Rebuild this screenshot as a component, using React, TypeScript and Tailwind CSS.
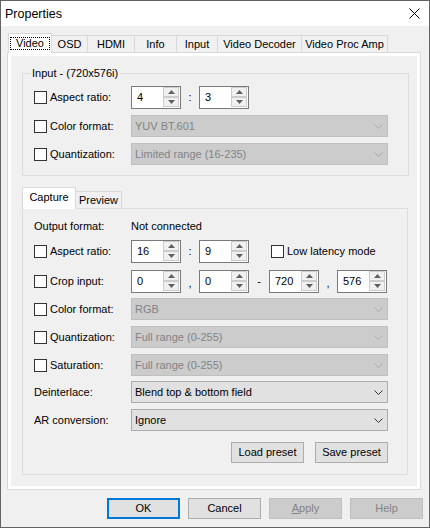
import React from 'react';

const tabs = [
  { label: 'Video', w: 'w-[44px]' },
  { label: 'OSD', w: 'w-[36px]' },
  { label: 'HDMI', w: 'w-[47px]' },
  { label: 'Info', w: 'w-[42px]' },
  { label: 'Input', w: 'w-[41px]' },
  { label: 'Video Decoder', w: 'w-[84px]' },
  { label: 'Video Proc Amp', w: 'w-[86px]' },
];

function Arrow({ down }: { down?: boolean }) {
  return (
    <svg width="7" height="4" viewBox="0 0 7 4">
      {down ? <polygon points="0,0 7,0 3.5,4" fill="#606060" /> : <polygon points="0,4 7,4 3.5,0" fill="#606060" />}
    </svg>
  );
}

function Spin({ value }: { value: string }) {
  return (
    <div className="flex h-[23px] w-[50px] border border-[#7a7a7a] bg-white">
      <div className="flex flex-1 items-center pl-[5px]">{value}</div>
      <div className="flex w-[17px] flex-col justify-center pr-px">
        <div className="flex h-[10px] items-center justify-center border border-[#cccccc] bg-[#f0f0f0]">
          <Arrow />
        </div>
        <div className="flex h-[10px] items-center justify-center border border-[#cccccc] bg-[#f0f0f0]">
          <Arrow down />
        </div>
      </div>
    </div>
  );
}

function Combo({ text, disabled }: { text: string; disabled?: boolean }) {
  return (
    <div
      className={
        disabled
          ? 'flex h-[22px] w-[257px] items-center justify-between border border-[#bfbfbf] bg-[#cccccc] pl-[3px] pr-[4px] text-[#838383]'
          : 'flex h-[22px] w-[257px] items-center justify-between border border-[#adadad] bg-[#e1e1e1] pl-[3px] pr-[4px] text-black'
      }
    >
      <span>{text}</span>
      <svg width="9" height="5" viewBox="0 0 9 5">
        <polyline points="0.5,0.5 4.5,4.5 8.5,0.5" fill="none" stroke={disabled ? '#a8a8a8' : '#333333'} strokeWidth="1" />
      </svg>
    </div>
  );
}

function Check({ label }: { label: string }) {
  return (
    <div className="flex items-center">
      <div className="h-[13px] w-[13px] border border-[#333333] bg-white" />
      <span className="ml-[3px]">{label}</span>
    </div>
  );
}

function Btn({ children, variant }: { children: React.ReactNode; variant?: 'default' | 'disabled' }) {
  if (variant === 'default')
    return (
      <div className="flex h-[21px] w-[73px] items-center justify-center border-2 border-[#0078d7] bg-[#e1e1e1]">{children}</div>
    );
  if (variant === 'disabled')
    return (
      <div className="flex h-[21px] w-[73px] items-center justify-center border border-[#bfbfbf] bg-[#cccccc] text-[#838383]">
        {children}
      </div>
    );
  return <div className="flex h-[21px] w-[73px] items-center justify-center border border-[#adadad] bg-[#e1e1e1]">{children}</div>;
}

export default function App() {
  return (
    <div
      className="flex h-[528px] w-[430px] flex-col border border-[#646464] bg-[#f0f0f0] text-[11px] leading-none text-black"
      style={{ fontFamily: '"Liberation Sans", Arial, sans-serif' }}
    >
      {/* Title bar */}
      <div className="flex h-[25px] items-center justify-between bg-white pl-[4px] pr-[9px]">
        <span className="pt-[2px] text-[12.5px]">Properties</span>
        <svg width="11" height="11" viewBox="0 0 11 11">
          <path d="M0.5 0.5 L10.5 10.5 M10.5 0.5 L0.5 10.5" stroke="#000" strokeWidth="1" />
        </svg>
      </div>

      {/* Tab control */}
      <div className="ml-[6px] mt-[7px] w-[414px]">
        <div className="flex h-[20px] items-end pl-px">
          {tabs.map((t, i) =>
            i === 0 ? (
              <div
                key={t.label}
                className={`relative z-10 flex h-[20px] items-start justify-center border-l border-r border-t border-[#d9d9d9] bg-white pt-[3px] ${t.w}`}
              >
                <div className="flex h-[13px] w-[40px] items-center justify-center border border-dotted border-black">
                  {t.label}
                </div>
              </div>
            ) : (
              <div
                key={t.label}
                className={`mb-px flex h-[17px] items-center justify-center border-r border-t border-[#d9d9d9] bg-[#f0f0f0] pt-[1px] ${t.w}`}
              >
                {t.label}
              </div>
            )
          )}
        </div>

        <div className="-mt-px h-[438px] border border-[#d9d9d9] bg-white p-[3px]">
          <div className="flex h-full flex-col bg-[#f0f0f0] pl-[11px]">
            {/* Input group */}
            <div className="relative mt-[17px] h-[103px] w-[387px] border border-[#dcdcdc] pl-[11px] pt-[11px]">
              <span className="absolute left-[7px] top-[-7px] bg-[#f0f0f0] px-[2px] leading-[13px]">Input - (720x576i)</span>
              <div className="flex h-[24px] items-center">
                <div className="w-[97px]">
                  <Check label="Aspect ratio:" />
                </div>
                <Spin value="4" />
                <span className="flex w-[18px] justify-center">:</span>
                <Spin value="3" />
              </div>
              <div className="mt-[5px] flex h-[24px] items-center">
                <div className="w-[97px]">
                  <Check label="Color format:" />
                </div>
                <Combo text="YUV BT.601" disabled />
              </div>
              <div className="mt-[4px] flex h-[24px] items-center">
                <div className="w-[97px]">
                  <Check label="Quantization:" />
                </div>
                <Combo text="Limited range (16-235)" disabled />
              </div>
            </div>

            {/* Capture / Preview */}
            <div className="mt-[11px] w-[386px]">
              <div className="flex h-[22px] items-end">
                <div className="relative z-10 flex h-[22px] w-[54px] items-center justify-center border-l border-r border-t border-[#d9d9d9] bg-white pb-[3px]">
                  Capture
                </div>
                <div className="mb-px flex h-[17px] w-[46px] items-center justify-center border-r border-t border-[#d9d9d9] bg-[#f0f0f0] pt-[1px]">
                  Preview
                </div>
              </div>
              <div className="-mt-px h-[267px] border border-[#dcdcdc] pl-[11px] pt-[5px]">
                <div className="flex h-[24px] items-center">
                  <div className="w-[97px]">Output format:</div>
                  <span>Not connected</span>
                </div>
                <div className="mt-px flex h-[24px] items-center">
                  <div className="w-[97px]">
                    <Check label="Aspect ratio:" />
                  </div>
                  <Spin value="16" />
                  <span className="flex w-[18px] justify-center">:</span>
                  <Spin value="9" />
                  <div className="ml-[22px]">
                    <Check label="Low latency mode" />
                  </div>
                </div>
                <div className="mt-[6px] flex h-[24px] items-center">
                  <div className="w-[97px]">
                    <Check label="Crop input:" />
                  </div>
                  <Spin value="0" />
                  <span className="flex w-[18px] justify-center pt-[4px]">,</span>
                  <Spin value="0" />
                  <span className="flex w-[20px] justify-center">-</span>
                  <Spin value="720" />
                  <span className="flex w-[18px] justify-center pt-[4px]">,</span>
                  <Spin value="576" />
                </div>
                <div className="mt-[4px] flex h-[24px] items-center">
                  <div className="w-[97px]">
                    <Check label="Color format:" />
                  </div>
                  <Combo text="RGB" disabled />
                </div>
                <div className="mt-[4px] flex h-[24px] items-center">
                  <div className="w-[97px]">
                    <Check label="Quantization:" />
                  </div>
                  <Combo text="Full range (0-255)" disabled />
                </div>
                <div className="mt-[4px] flex h-[24px] items-center">
                  <div className="w-[97px]">
                    <Check label="Saturation:" />
                  </div>
                  <Combo text="Full range (0-255)" disabled />
                </div>
                <div className="mt-[3px] flex h-[24px] items-center">
                  <div className="w-[97px]">Deinterlace:</div>
                  <Combo text="Blend top & bottom field" />
                </div>
                <div className="mt-[4px] flex h-[24px] items-center">
                  <div className="w-[97px]">AR conversion:</div>
                  <Combo text="Ignore" />
                </div>
                <div className="mt-[8px] flex h-[24px] w-[354px] items-center justify-end gap-[11px]">
                  <Btn>Load preset</Btn>
                  <Btn>Save preset</Btn>
                </div>
              </div>
            </div>
          </div>
        </div>
      </div>

      {/* Dialog buttons */}
      <div className="mt-[8px] flex justify-end gap-[8px] pr-[6px]">
        <Btn variant="default">OK</Btn>
        <Btn>Cancel</Btn>
        <Btn variant="disabled">
          <span>
            <span className="underline">A</span>pply
          </span>
        </Btn>
        <Btn variant="disabled">Help</Btn>
      </div>
    </div>
  );
}
